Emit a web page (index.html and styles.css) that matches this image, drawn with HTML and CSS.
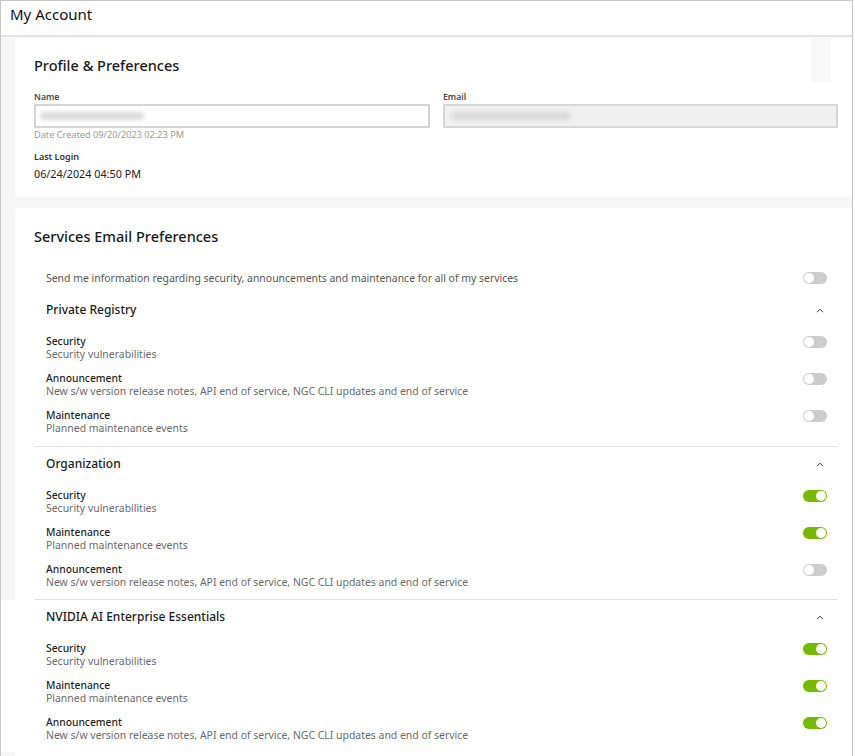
FILE: index.html
```html
<!DOCTYPE html>
<html lang="en">
<head>
<meta charset="utf-8">
<title>My Account</title>
<link rel="stylesheet" href="styles.css">
</head>
<body>
<div class="page">
  <header class="topbar">
    <h1 class="page-title">My Account</h1>
  </header>
  <main class="content">
    <section class="card profile">
      <div class="profile-corner"></div>
      <h2 class="card-title">Profile &amp; Preferences</h2>
      <div class="fields">
        <div class="field">
          <label class="field-label">Name</label>
          <div class="input"><span class="blur blur-name"></span></div>
          <div class="field-hint">Date Created 09/20/2023 02:23 PM</div>
        </div>
        <div class="field">
          <label class="field-label">Email</label>
          <div class="input input-disabled"><span class="blur blur-email"></span></div>
        </div>
      </div>
      <div class="login-label">Last Login</div>
      <div class="login-value">06/24/2024 04:50 PM</div>
    </section>

    <section class="card services">
      <h2 class="card-title">Services Email Preferences</h2>
      <div class="all-row">
        <span class="all-text">Send me information regarding security, announcements and maintenance for all of my services</span>
        <span class="toggle"></span>
      </div>

      <div class="group group-first">
        <div class="group-head">
          <span class="group-title">Private Registry</span>
          <svg class="chevron" viewBox="0 0 8 5" width="8" height="5"><polyline points="1,4.2 4,1.2 7,4.2" fill="none" stroke="#333" stroke-width="1"/></svg>
        </div>
        <div class="item">
          <div class="item-text"><div class="item-title">Security</div><div class="item-desc">Security vulnerabilities</div></div>
          <span class="toggle"></span>
        </div>
        <div class="item">
          <div class="item-text"><div class="item-title">Announcement</div><div class="item-desc">New s/w version release notes, API end of service, NGC CLI updates and end of service</div></div>
          <span class="toggle"></span>
        </div>
        <div class="item">
          <div class="item-text"><div class="item-title">Maintenance</div><div class="item-desc">Planned maintenance events</div></div>
          <span class="toggle"></span>
        </div>
      </div>

      <div class="group">
        <div class="group-head">
          <span class="group-title">Organization</span>
          <svg class="chevron" viewBox="0 0 8 5" width="8" height="5"><polyline points="1,4.2 4,1.2 7,4.2" fill="none" stroke="#333" stroke-width="1"/></svg>
        </div>
        <div class="item">
          <div class="item-text"><div class="item-title">Security</div><div class="item-desc">Security vulnerabilities</div></div>
          <span class="toggle on"></span>
        </div>
        <div class="item">
          <div class="item-text"><div class="item-title">Maintenance</div><div class="item-desc">Planned maintenance events</div></div>
          <span class="toggle on"></span>
        </div>
        <div class="item">
          <div class="item-text"><div class="item-title">Announcement</div><div class="item-desc">New s/w version release notes, API end of service, NGC CLI updates and end of service</div></div>
          <span class="toggle"></span>
        </div>
      </div>

      <div class="group group-last">
        <div class="group-head">
          <span class="group-title">NVIDIA AI Enterprise Essentials</span>
          <svg class="chevron" viewBox="0 0 8 5" width="8" height="5"><polyline points="1,4.2 4,1.2 7,4.2" fill="none" stroke="#333" stroke-width="1"/></svg>
        </div>
        <div class="item">
          <div class="item-text"><div class="item-title">Security</div><div class="item-desc">Security vulnerabilities</div></div>
          <span class="toggle on"></span>
        </div>
        <div class="item">
          <div class="item-text"><div class="item-title">Maintenance</div><div class="item-desc">Planned maintenance events</div></div>
          <span class="toggle on"></span>
        </div>
        <div class="item">
          <div class="item-text"><div class="item-title">Announcement</div><div class="item-desc">New s/w version release notes, API end of service, NGC CLI updates and end of service</div></div>
          <span class="toggle on"></span>
        </div>
      </div>
    </section>
  </main>
</div>
</body>
</html>
```
FILE: styles.css
```css
* { box-sizing: border-box; }
html, body { margin: 0; padding: 0; background: #ffffff; }
body {
  font-family: "Noto Sans", "DejaVu Sans", sans-serif;
  color: #1a1a1a;
}
.page {
  width: 853px;
  height: 756px;
  border: 1px solid #c6c6c6;
  border-bottom: none;
  overflow: hidden;
  display: flex;
  flex-direction: column;
}
.topbar {
  height: 36px;
  padding-left: 9px;
  border-bottom: 2px solid #e4e4e4;
  flex: none;
}
.page-title {
  margin: 0;
  font-size: 15px;
  font-weight: 400;
  line-height: 27px;
  color: #111;
}
.content {
  flex: 1;
  background: #f6f6f6;
  padding: 1px 0 0 14px;
  display: flex;
  flex-direction: column;
  gap: 11px;
}
.card {
  background: #ffffff;
  border-radius: 4px 0 0 4px;
  padding: 0 14px 0 19px;
  position: relative;
}
.profile {
  padding-top: 16px;
  padding-bottom: 16px;
}
.profile-corner {
  position: absolute;
  right: 21px;
  top: 0;
  width: 20px;
  height: 44px;
  background: #f8f8f8;
}
.card-title {
  margin: 0;
  font-size: 14.5px;
  font-weight: 500;
  line-height: 22px;
  color: #1a1a1a;
}
.fields {
  margin-top: 15px;
  display: grid;
  grid-template-columns: 396px 1fr;
  column-gap: 13px;
}
.field-label {
  display: block;
  font-size: 8.7px;
  font-weight: 600;
  line-height: 12px;
  color: #4a4a4a;
  margin-bottom: 1px;
}
.input {
  height: 24px;
  border: 2px solid #d4d4d4;
  border-radius: 1px;
  background: #fff;
  display: flex;
  align-items: center;
  padding-left: 4px;
}
.input-disabled {
  background: #f0f0f0;
  border-color: #d6d6d6;
}
.blur {
  display: block;
  height: 8px;
  border-radius: 4px;
  background: #d9d9d9;
  filter: blur(2px);
}
.blur-name { width: 104px; }
.blur-email { width: 120px; margin-left: 2px; }
.field-hint {
  margin-top: 1px;
  font-size: 9.2px;
  line-height: 12px;
  color: #9a9a9a;
}
.login-label {
  margin-top: 10px;
  font-size: 9px;
  font-weight: 600;
  line-height: 12px;
  color: #333;
}
.login-value {
  margin-top: 4px;
  font-size: 10.8px;
  line-height: 14px;
  color: #222;
}
.services {
  flex: 1;
  padding-top: 17px;
  border-radius: 4px 0 0 0;
}
.all-row {
  margin-top: 21px;
  height: 20px;
  padding: 0 11px 0 12px;
  display: flex;
  align-items: center;
  justify-content: space-between;
}
.all-text {
  font-size: 10.45px;
  color: #555;
}
.toggle {
  flex: none;
  width: 24px;
  height: 12px;
  border-radius: 6px;
  background: #cccccc;
  position: relative;
}
.toggle::after {
  content: "";
  position: absolute;
  top: 1px;
  left: 1px;
  width: 10px;
  height: 10px;
  border-radius: 50%;
  background: #ffffff;
}
.toggle.on { background: #76b900; }
.toggle.on::after { left: 13px; }
.group {
  border-bottom: 1px solid #e2e2e2;
  padding-bottom: 10px;
}
.group-first {
  margin-top: 5px;
  padding-bottom: 11px;
}
.group-last {
  border-bottom: none;
  margin-left: -33px;
  padding-left: 33px;
  background: #fff;
}
.group-head {
  padding: 7px 14px 0 12px;
  height: 27px;
  margin-bottom: 15px;
  display: flex;
  align-items: center;
  justify-content: space-between;
}
.group-title {
  font-size: 12px;
  font-weight: 500;
  color: #1a1a1a;
  line-height: 20px;
}
.chevron { display: block; }
.item {
  height: 26px;
  margin-bottom: 11px;
  padding: 0 11px 0 12px;
  display: flex;
  align-items: flex-start;
  justify-content: space-between;
}
.item:last-child { margin-bottom: 0; }
.item-title {
  font-size: 10.3px;
  font-weight: 500;
  line-height: 13px;
  color: #1f1f1f;
}
.item-desc {
  font-size: 10.45px;
  line-height: 13px;
  color: #6a6a6a;
}
.item .toggle { margin-top: 0.5px; }
```
